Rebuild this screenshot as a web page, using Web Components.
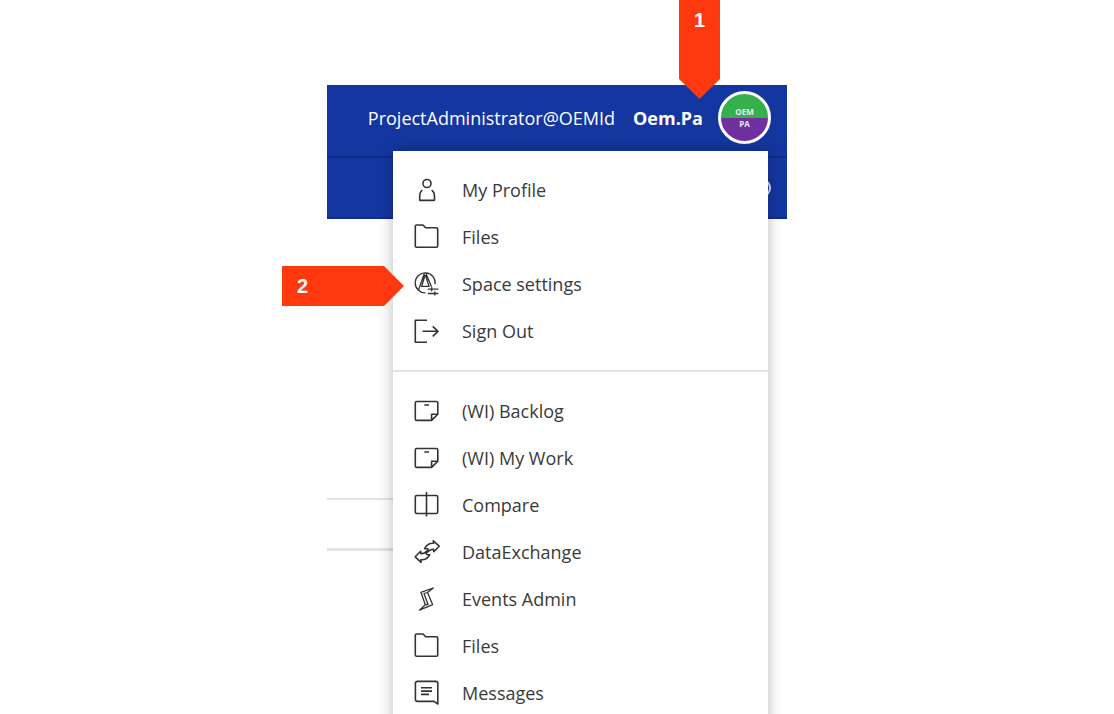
<!DOCTYPE html>
<html lang="en">
<head>
<meta charset="utf-8">
<meta name="viewport" content="width=device-width, initial-scale=1">
<title>User menu</title>
<style>
body { margin: 0; background: #fff; color: #3a3a3a; font-family: "Open Sans", "Noto Sans", sans-serif; }
</style>
</head>
<body>
<user-menu-page></user-menu-page>
<script>
const define = (name, html, setup) => {
  const template = document.createElement('template');
  template.innerHTML = html;
  customElements.define(name, class extends HTMLElement {
    connectedCallback() {
      if (this.shadowRoot) return;
      this.attachShadow({ mode: 'open' }).append(template.content.cloneNode(true));
      if (setup) setup(this, this.shadowRoot);
    }
  });
};

const icons = {
  person: '<circle cx="14" cy="7.500" r="4"/><path d="M9.300 14.200C7.300 15.500 6.700 18 6.700 20.500V23.700Q6.700 24.400 7.400 24.400H20.800Q21.500 24.400 21.500 23.700V20.500C21.500 18 20.700 15.500 18.700 14.200"/>',
  folder: '<path d="M3.500 2H9.500Q10.300 2 10.800 2.700L12.500 4.700H23.500Q24.700 4.700 24.700 5.900V23Q24.700 24.300 23.500 24.300H3.500Q2.300 24.300 2.300 23V3.300Q2.300 2 3.500 2Z"/>',
  space: '<path d="M12.500 22.900A10 10 0 1 1 22.100 14.200M11.500 3L5.500 20.300M12.700 3L18.500 16.700M12 5L8.700 16.400H16L12.400 5M14.800 19.200H25.300M14.800 23.500H25.300M18.700 17.200V21.200M21.800 21.500V25.500" stroke-width="1.300"/>',
  signout: '<path d="M14 3.300H2.300V25.300H14M9.500 14.300H25M19.700 9.300L25 14.300L19.700 19.300"/>',
  note: '<path d="M18 23.400H3.800Q2.300 23.400 2.300 21.900V6Q2.300 4.500 3.800 4.500H23.300Q24.800 4.500 24.800 6V17.300L18.600 23.400V17.300H24.800M11.300 8H16"/>',
  compare: '<rect x="2.300" y="4.500" width="22.400" height="18" rx="1.500"/><path d="M13.500 1V25.500"/>',
  exchange: '<path d="M20.300 2.800L26.200 8.200L20.800 13.700L20.500 11.200C18 11.300 16 12.100 14.300 14.200C16 11 15.500 10.300 11.600 10.700C13.500 6.600 16.700 5 20.500 5.200ZM8.100 24.300L2.200 18.800L7.600 13.300L7.900 15.800C10.400 15.700 12.500 14.900 14.100 12.800C12.400 16 12.900 17.200 16.800 16.700C15 20.400 11.700 22 7.900 21.800Z"/>',
  events: '<path d="M20.300 3L7.900 7.300L12.300 19.700L6.500 25.200L19.700 19.700L14.500 7.500ZM14.500 7.500L11 8.500L15 19.500L12.300 19.700" stroke-width="1.300"/>',
  message: '<path d="M24.800 25V4.500Q24.800 2.400 22.700 2.400H4.500Q2.400 2.400 2.400 4.500V20.300Q2.400 22.400 4.500 22.400H21ZM8 8.700H19M8 12.100H19M8 15.400H16"/>'
};

define('line-icon', `
<style>
  :host { display: block; width: 28px; height: 28px; }
  svg { display: block; width: 100%; height: 100%; fill: none; stroke: #333; stroke-width: 1.6; stroke-linejoin: round; }
</style>
<svg viewBox="0 0 28 28" aria-hidden="true"></svg>`,
  (host, root) => { root.querySelector('svg').innerHTML = icons[host.getAttribute('name')]; });

/* The icon name is read from the link and handed to its icon. */
define('menu-link', `
<style>
  :host { display: block; }
  a { display: flex; align-items: center; gap: 21px; height: 47px; padding: 0 20px; color: inherit; text-decoration: none; font-size: 18px; line-height: 24px; white-space: nowrap; }
  .icon { margin-bottom: 1px; }
  .label { margin-bottom: 2px; }
</style>
<a href="#"><span class="icon"></span><span class="label"><slot></slot></span></a>`,
  (host, root) => {
    const icon = document.createElement('line-icon');
    icon.setAttribute('name', host.getAttribute('icon'));
    root.querySelector('.icon').append(icon);
  });

define('menu-group', `
<style>
  :host { display: block; padding: 16px 0 15px; }
  :host(:not(:last-of-type)) { border-bottom: 2px solid #e4e4e4; }
</style>
<slot></slot>`);

define('user-menu', `
<style>
  :host { display: block; background: #fff; box-shadow: 0 0 14px rgba(0, 0, 0, .28); }
</style>
<nav aria-label="User menu"><slot></slot></nav>`);

define('user-avatar', `
<style>
  :host { display: flex; flex-direction: column; justify-content: center; box-sizing: border-box; width: 53px; height: 53px; border: 3px solid #fff; border-radius: 50%; background: linear-gradient(#34b14c 50%, #7030a0 50%); color: #f0e8f4; font-size: 8px; line-height: 12px; font-weight: 700; text-align: center; }
</style>
<span>OEM</span><span>PA</span>`);

define('account-header', `
<style>
  :host { display: block; background: #1436a0; color: #fff; }
  header { display: flex; align-items: center; justify-content: flex-end; padding: 6px 16px 12px; font-size: 18px; line-height: 24px; white-space: nowrap; border-bottom: 2px solid #0f2d8a; }
  b { margin: 0 15px 0 18px; }
  .tools { display: flex; align-items: center; justify-content: flex-end; height: 59px; padding: 0 16px; border-bottom: 2px solid #0f2d8a; }
  button { width: 16px; height: 18px; padding: 0; border: 2px solid #dde3f5; border-radius: 50%; background: none; }
</style>
<header><span>ProjectAdministrator@OEMId</span><b>Oem.Pa</b><user-avatar></user-avatar></header>
<div class="tools"><button type="button" aria-label="Help"></button></div>`);

define('step-callout', `
<style>
  :host { display: block; box-sizing: border-box; background: #ff390d; color: #fff; font: bold 20px/24px "Liberation Sans", sans-serif; }
  :host([direction="down"]) { width: 41px; height: 99px; padding-top: 8px; text-align: center; clip-path: polygon(0 0, 100% 0, 100% 79px, 50% 100%, 0 79px); }
  :host([direction="right"]) { width: 122px; height: 40px; padding: 8px 15px; clip-path: polygon(0 0, 102px 0, 100% 50%, 102px 100%, 0 100%); }
</style>
<slot></slot>`);

define('user-menu-page', `
<style>
  :host { display: block; height: 100vh; overflow: hidden; }
  main { position: relative; width: 460px; max-width: 100%; margin: 85px auto 0; }
  user-menu { position: absolute; top: 66px; right: 19px; width: 375px; }
  step-callout { position: absolute; }
  .first { top: -85px; right: 67px; }
  .second { top: 181px; left: -45px; }
  .rows { width: 25%; padding-top: 279px; }
  .row { height: 48px; border-top: 2px solid #e4e4e4; }
  .row + .row { border-top-width: 3px; }
</style>
<main>
  <account-header></account-header>
  <div class="rows"><div class="row"></div><div class="row"></div></div>
  <user-menu>
    <menu-group>
      <menu-link icon="person">My Profile</menu-link>
      <menu-link icon="folder">Files</menu-link>
      <menu-link icon="space">Space settings</menu-link>
      <menu-link icon="signout">Sign Out</menu-link>
    </menu-group>
    <menu-group>
      <menu-link icon="note">(WI) Backlog</menu-link>
      <menu-link icon="note">(WI) My Work</menu-link>
      <menu-link icon="compare">Compare</menu-link>
      <menu-link icon="exchange">DataExchange</menu-link>
      <menu-link icon="events">Events Admin</menu-link>
      <menu-link icon="folder">Files</menu-link>
      <menu-link icon="message">Messages</menu-link>
    </menu-group>
  </user-menu>
  <step-callout class="first" direction="down">1</step-callout>
  <step-callout class="second" direction="right">2</step-callout>
</main>`);
</script>
</body>
</html>
